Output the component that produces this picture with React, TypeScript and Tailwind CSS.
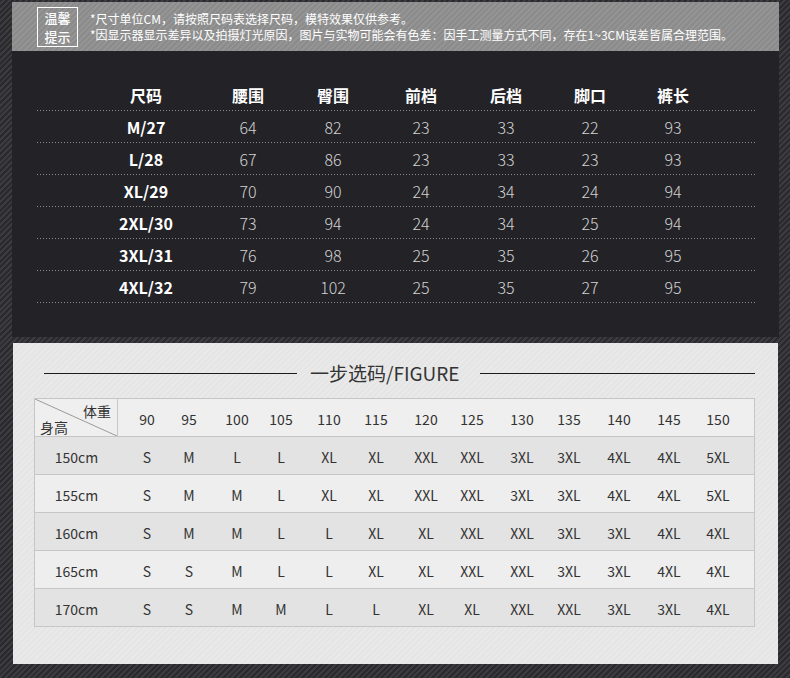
const cjk = "font-['Noto_Sans_CJK_SC','Noto_Sans',sans-serif]";

const sizeHead = ["尺码", "腰围", "臀围", "前档", "后档", "脚口", "裤长"];
const sizeRows = [
  ["M/27", "64", "82", "23", "33", "22", "93"],
  ["L/28", "67", "86", "23", "33", "23", "93"],
  ["XL/29", "70", "90", "24", "34", "24", "94"],
  ["2XL/30", "73", "94", "24", "34", "25", "94"],
  ["3XL/31", "76", "98", "25", "35", "26", "95"],
  ["4XL/32", "79", "102", "25", "35", "27", "95"],
];
// left offsets so each column sits under its header
const sizeGap = ["ml-[69px]", "ml-[22px]", "ml-[5px]", "ml-[8px]", "ml-[5px]", "ml-[4px]", "ml-[3px]"];

const weights = ["90", "95", "100", "105", "110", "115", "120", "125", "130", "135", "140", "145", "150"];
const fitRows = [
  ["150cm", "S", "M", "L", "L", "XL", "XL", "XXL", "XXL", "3XL", "3XL", "4XL", "4XL", "5XL"],
  ["155cm", "S", "M", "M", "L", "XL", "XL", "XXL", "XXL", "3XL", "3XL", "4XL", "4XL", "5XL"],
  ["160cm", "S", "M", "M", "L", "L", "XL", "XL", "XXL", "XXL", "3XL", "3XL", "4XL", "4XL"],
  ["165cm", "S", "S", "M", "L", "L", "XL", "XL", "XXL", "XXL", "3XL", "3XL", "4XL", "4XL"],
  ["170cm", "S", "S", "M", "M", "L", "L", "XL", "XL", "XXL", "XXL", "3XL", "3XL", "4XL"],
];
const fitGap = [
  "ml-[9px]", "ml-[2px]", "ml-[8px]", "ml-[4px]", "ml-[8px]", "ml-[7px]", "ml-[10px]",
  "ml-[6px]", "ml-[10px]", "ml-[7px]", "ml-[10px]", "ml-[10px]", "ml-[9px]",
];

const Dots = () => (
  <div className="h-px w-[720px] bg-[linear-gradient(to_right,#8a8a8a_1px,transparent_1px)] bg-[length:3px_1px]" />
);

const Notice = () => (
  <div className="flex h-[49px] items-center bg-[repeating-linear-gradient(135deg,#8b8b8b_0_2px,#949494_2px_4px)] pl-[25px] text-white">
    <div className="flex h-[40px] w-[41px] flex-col items-center justify-center border border-white text-[13px] leading-[19px] font-medium">
      <span>温馨</span>
      <span>提示</span>
    </div>
    <div className="ml-[12px] text-[12px] leading-[16px]">
      <p>*尺寸单位CM，请按照尺码表选择尺码，模特效果仅供参考。</p>
      <p>*因显示器显示差异以及拍摄灯光原因，图片与实物可能会有色差：因手工测量方式不同，存在1~3CM误差皆属合理范围。</p>
    </div>
  </div>
);

const SizeTable = () => (
  <div className="bg-[#232227] pt-[28px] pb-[34px] pl-[25px]">
    <div className="flex h-[31px] items-center text-[16px] font-bold text-white">
      {sizeHead.map((h, i) => (
        <span key={h} className={`${sizeGap[i]} w-[80px] text-center`}>
          {h}
        </span>
      ))}
    </div>
    <Dots />
    {sizeRows.map((row) => (
      <div key={row[0]}>
        <div className="flex h-[31px] items-center text-[16px]">
          {row.map((v, i) => (
            <span
              key={i}
              className={`${sizeGap[i]} w-[80px] text-center ${
                i === 0 ? "font-bold text-white" : "font-light text-[#d2d2d2]"
              }`}
            >
              {v}
            </span>
          ))}
        </div>
        <Dots />
      </div>
    ))}
  </div>
);

const FitTable = () => (
  <div className="mx-px bg-[repeating-linear-gradient(135deg,#e5e5e5_0_2px,#e9e9e9_2px_4px)] pt-[17px] pb-[37px]">
    <div className="flex h-[26px] items-center pl-[31px]">
      <div className="h-px w-[253px] bg-[#1c1c1c]" />
      <div className="w-[183px] pl-[13px] text-[19px] text-[#333]">一步选码/FIGURE</div>
      <div className="h-px w-[275px] bg-[#1c1c1c]" />
    </div>
    <div className="mt-[12px] ml-[21px] w-[721px] border-x border-t border-[#c6c6c6] text-[14px] text-[#333]">
      <div className="flex h-[38px] border-b border-[#c6c6c6] bg-[#efefef]">
        <div className="relative h-full w-[83px] border-r border-[#c6c6c6]">
          <svg className="absolute inset-0 h-full w-full" preserveAspectRatio="none" viewBox="0 0 82 37">
            <line x1="0" y1="0" x2="82" y2="37" stroke="#9a9a9a" strokeWidth="1" />
          </svg>
          <span className="absolute top-[3px] right-[6px] leading-[18px]">体重</span>
          <span className="absolute bottom-[0px] left-[5px] leading-[18px]">身高</span>
        </div>
        {weights.map((w, i) => (
          <span key={w} className={`${fitGap[i]} flex w-[40px] items-center justify-center pt-[4px]`}>
            {w}
          </span>
        ))}
      </div>
      {fitRows.map((row, r) => (
        <div
          key={row[0]}
          className={`flex h-[38px] items-center border-b border-[#c6c6c6] pt-[4px] ${
            r % 2 === 0 ? "bg-[#e3e3e3]" : "bg-[#eeeeee]"
          }`}
        >
          <span className="w-[83px] text-center">{row[0]}</span>
          {row.slice(1).map((v, i) => (
            <span key={i} className={`${fitGap[i]} w-[40px] text-center`}>
              {v}
            </span>
          ))}
        </div>
      ))}
    </div>
  </div>
);

export default function App() {
  return (
    <div
      className={`${cjk} h-[678px] w-[790px] overflow-hidden bg-[repeating-linear-gradient(135deg,#2a2a2d_0_2px,#3c3c40_2px_4px)] pt-[2px] pr-[11px] pl-[12px]`}
    >
      <Notice />
      <SizeTable />
      <div className="h-[6px]" />
      <FitTable />
    </div>
  );
}
